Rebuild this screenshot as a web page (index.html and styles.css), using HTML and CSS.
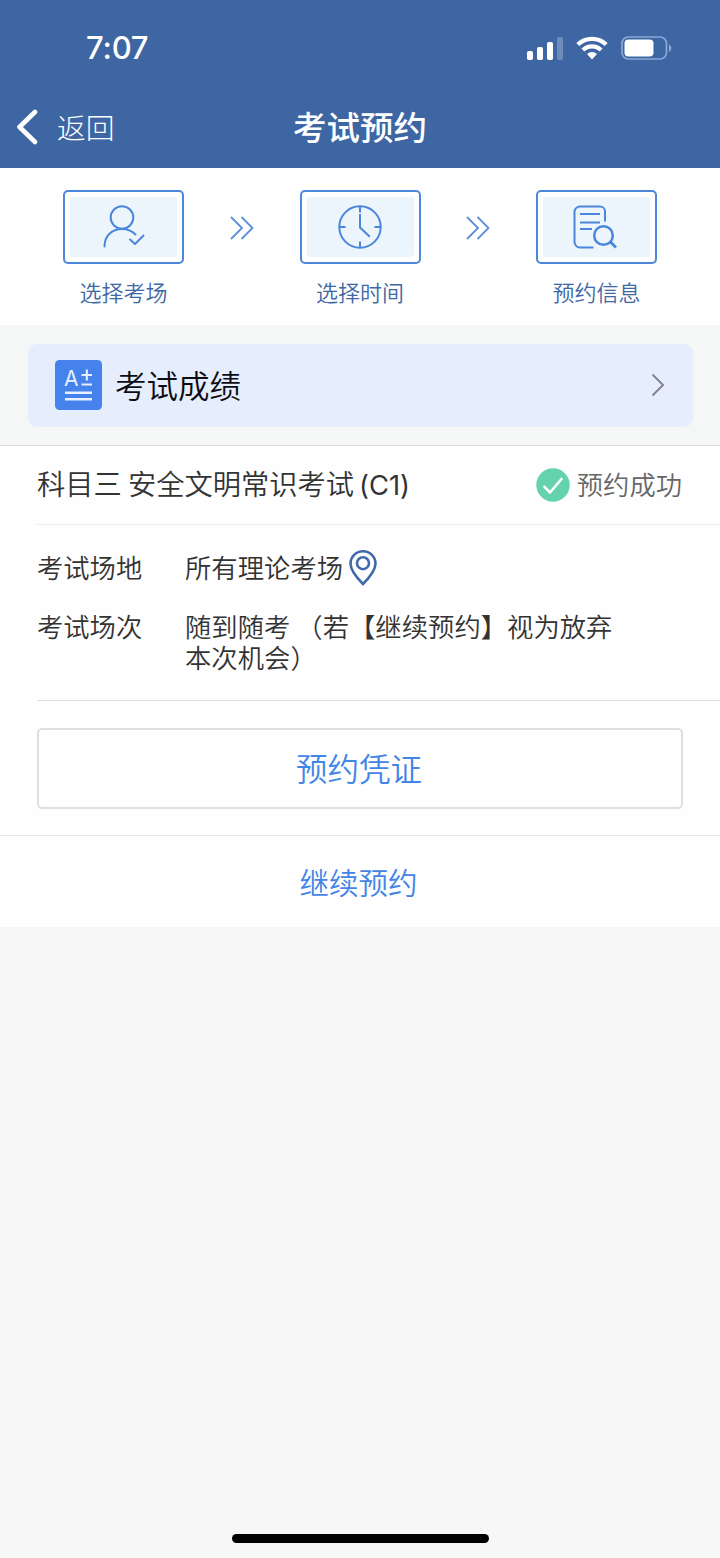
FILE: index.html
```html
<!DOCTYPE html>
<html lang="zh-CN">
<head>
    <meta charset="UTF-8">
    <meta name="viewport" content="width=device-width, initial-scale=1.0">
    <title>考试预约</title>
    <link rel="stylesheet" href="styles.css">
</head>
<body>

    <header class="header">
        <div class="status-bar">
            <span class="time">7:07</span>
            <div class="status-icons">
                <svg class="signal" width="36" height="23" viewBox="0 0 36 23" fill="#fff">
                    <rect x="0" y="14" width="6" height="9" rx="1.8"/>
                    <rect x="10" y="10" width="6" height="13" rx="1.8"/>
                    <rect x="20" y="5" width="6" height="18" rx="1.8"/>
                    <rect x="30" y="0" width="6" height="23" rx="1.8" opacity="0.25"/>
                </svg>
                <svg class="wifi" width="32" height="24" viewBox="0 0 32 24">
                    <g fill="none" stroke="#fff" stroke-width="4.2">
                        <path d="M1.8 8.6a20.3 20.3 0 0 1 28.4 0"/>
                        <path d="M6.9 14a13 13 0 0 1 18.2 0"/>
                    </g>
                    <path d="M16 23.4l-5-5.3a7 7 0 0 1 10 0z" fill="#fff"/>
                </svg>
                <svg class="battery" width="51" height="24" viewBox="0 0 51 24">
                    <rect x="1" y="1" width="44.5" height="22" rx="6.5" fill="none" stroke="#8aa8d8" stroke-width="1.7"/>
                    <rect x="3.5" y="3.5" width="29" height="17" rx="4" fill="#fff"/>
                    <path d="M48 8.5c3 1 3 6.5 0 7.5z" fill="#8aa8d8"/>
                </svg>
            </div>
        </div>
        <nav class="nav">
            <a class="back" href="#">
                <svg width="24" height="36" viewBox="0 0 24 36" fill="none" stroke="#fff" stroke-width="4.6" stroke-linecap="round" stroke-linejoin="round">
                    <path d="M19 3L3.5 18L19 33"/>
                </svg>
                <span>返回</span>
            </a>
            <h1>考试预约</h1>
        </nav>
    </header>

    <section class="steps">
        <div class="step">
            <div class="step-box">
                <div class="step-inner">
                    <svg width="44" height="46" viewBox="0 0 44 46" fill="none" stroke="#4a86dc" stroke-width="2" stroke-linecap="round" stroke-linejoin="round">
                        <circle cx="20" cy="13.5" r="11.3"/>
                        <path d="M2.5 42.5C2.5 32 10 25 20 25c5.5 0 10 2 13.5 5.5"/>
                        <path d="M28 35.5l5 4.5l8.5-8.5"/>
                    </svg>
                </div>
            </div>
            <p>选择考场</p>
        </div>
        <svg class="arrows" width="24" height="26" viewBox="0 0 24 26" fill="none" stroke="#5b8ddb" stroke-width="1.8">
            <path d="M1 2l11 11L1 24M11.5 2l11 11l-11 11"/>
        </svg>
        <div class="step">
            <div class="step-box">
                <div class="step-inner">
                    <svg width="44" height="46" viewBox="0 0 44 46" fill="none" stroke="#4a86dc" stroke-width="2">
                        <circle cx="22" cy="23" r="20.7"/>
                        <path d="M22 2.5v6M22 37.5v6M1.5 23h6M36.5 23h6"/>
                        <path d="M22 10v13.5l9.8 9.3"/>
                    </svg>
                </div>
            </div>
            <p>选择时间</p>
        </div>
        <svg class="arrows" width="24" height="26" viewBox="0 0 24 26" fill="none" stroke="#5b8ddb" stroke-width="1.8">
            <path d="M1 2l11 11L1 24M11.5 2l11 11l-11 11"/>
        </svg>
        <div class="step">
            <div class="step-box">
                <div class="step-inner">
                    <svg class="search-icon" width="44" height="46" viewBox="0 0 44 46" fill="none" stroke="#4a86dc" stroke-width="2">
                        <path d="M20.5 43.5H7a5.500 5.500 0 0 1-5.500-5.500V8A5.500 5.500 0 0 1 7 2.500h20a5 5 0 0 1 5 5v10"/>
                        <path d="M7 10h20M7 18.500h20M7 25h12"/>
                        <circle cx="30.500" cy="31.500" r="9.300" stroke-width="2.500"/>
                        <path d="M37 37.500l6 6" stroke-width="2.800"/>
                    </svg>
                </div>
            </div>
            <p>预约信息</p>
        </div>
    </section>

    <section class="score">
        <a class="score-card" href="#">
            <svg width="47" height="50" viewBox="0 0 47 50" fill="none" stroke="#e8f0ff" stroke-width="2.6">
                <rect width="47" height="50" rx="4.5" fill="#4582ec" stroke="none"/>
                <text class="grade" x="9" y="26">A</text>
                <path d="M26.5 15h10.5M31.8 9.5v11M26.5 24.5h10.5" stroke-width="2.1"/>
                <path d="M10 32.8h27M10 39.3h27"/>
            </svg>
            <span>考试成绩</span>
            <svg class="more" width="14" height="24" viewBox="0 0 14 24" fill="none" stroke="#84858c" stroke-width="2">
                <path d="M1.5 1.5L12 12L1.5 22.5"/>
            </svg>
        </a>
    </section>

    <main class="booking">
        <div class="booking-title">
            <h2>科目三 安全文明常识考试<span class="car-type">(C1)</span></h2>
            <div class="state">
                <svg width="34" height="34" viewBox="0 0 34 34">
                    <circle cx="17" cy="17" r="16.7" fill="#64d2ad"/>
                    <path d="M8.5 18.8l5.5 5.7L25.500 11" fill="none" stroke="#fff" stroke-width="2.6" stroke-linecap="round" stroke-linejoin="round"/>
                </svg>
                <span>预约成功</span>
            </div>
        </div>
        <dl class="info">
            <dt>考试场地</dt>
            <dd class="place">所有理论考场
                <svg width="28" height="36" viewBox="0 0 28 36" fill="none" stroke="#3f69a8" stroke-width="2.6">
                    <path d="M14 34C9.5 29.5 1.5 21 1.5 13.5a12.5 12.2 0 0 1 25 0C26.5 21 18.5 29.5 14 34z"/>
                    <circle cx="14" cy="13.2" r="6"/>
                </svg>
            </dd>
            <dt>考试场次</dt>
            <dd>随到随考 （若【继续预约】视为放弃本次机会）</dd>
        </dl>
        <div class="voucher">
            <button type="button">预约凭证</button>
        </div>
        <a class="continue" href="#">继续预约</a>
    </main>

    <div class="home-bar"></div>

</body>
</html>
```
FILE: styles.css
```css
* {
    box-sizing: border-box;
    margin: 0;
    padding: 0;
}

body {
    display: flex;
    flex-direction: column;
    width: 720px;
    height: 1558px;
    font-family: "Noto Sans CJK SC", sans-serif;
    font-weight: 350;
    background-color: #f7f7f7;
    color: #333;
    overflow: hidden;
    text-spacing-trim: space-all;
}

a {
    color: inherit;
    text-decoration: none;
}

svg {
    display: block;
    flex: none;
}

/* 顶部 */
.header {
    height: 168px;
    background-color: #3e66a3;
    color: #fff;
}

.status-bar {
    display: flex;
    justify-content: space-between;
    height: 88px;
    padding: 8px 48px 0 86px;
    align-items: center;
}

.time {
    font-family: Inter, sans-serif;
    font-size: 31px;
    font-weight: 550;
    line-height: 40px;
    letter-spacing: -0.2px;
}

.status-icons {
    display: flex;
    align-items: center;
}

.wifi {
    margin: 0 13px 0 13px;
}

.nav {
    display: grid;
    grid-template-columns: 1fr auto 1fr;
    align-items: center;
    height: 80px;
    padding-bottom: 2px;
}

.back {
    display: flex;
    align-items: center;
    gap: 17px;
    padding-left: 16px;
    font-size: 28.8px;
    font-weight: 300;
    line-height: 40px;
}

.nav h1 {
    font-size: 33.5px;
    font-weight: 500;
    line-height: 44px;
    padding-bottom: 2px;
}

.steps {
    display: flex;
    justify-content: space-between;
    height: 157px;
    padding: 22px 63px 0;
    background-color: #fefefe;
}

.step {
    width: 121px;
    text-align: center;
}

.step-box {
    height: 74px;
    padding: 5px;
    border: 2px solid #4d87db;
    border-radius: 5px;
}

.step-inner {
    display: flex;
    justify-content: center;
    align-items: center;
    height: 60px;
    border-radius: 3px;
    background-color: #edf5fc;
}

.step p {
    margin-top: 11px;
    font-size: 22px;
    line-height: 32px;
    color: #4068a5;
}

.search-icon {
    margin-right: 3px;
}

.arrows {
    margin-top: 25px;
}

.score {
    height: 121px;
    padding: 19px 27px 0 28px;
    border-bottom: 1px solid #dcdcdc;
    background-color: #f5f7f7;
}

.score-card {
    display: flex;
    align-items: center;
    height: 83px;
    padding: 0 28px 2px 27px;
    border-radius: 9px;
    background-color: #e6edfc;
    font-size: 31.5px;
    color: #0c0c12;
}

.grade {
    font-family: Inter, sans-serif;
    font-size: 21px;
    font-weight: 400;
    fill: #e8f0ff;
    stroke: none;
}

.score-card span {
    margin-left: 13px;
    padding-bottom: 2px;
    line-height: 46px;
}

.more {
    margin-left: auto;
}

.booking {
    height: 481px;
    background-color: #fefefe;
}

.booking-title {
    display: flex;
    justify-content: space-between;
    align-items: center;
    height: 79px;
    margin-left: 37px;
    padding: 0 38px 1px 0;
    border-bottom: 1px solid #ebebeb;
}

.booking-title h2 {
    font-size: 28.25px;
    font-weight: 350;
    line-height: 40px;
}

.car-type {
    margin-left: 5px;
    font-family: Inter, sans-serif;
    font-size: 27.3px;
    font-weight: 400;
}

.state {
    display: flex;
    align-items: center;
    gap: 7px;
    font-size: 26.3px;
    line-height: 36px;
    color: #666;
}

.state span {
    padding-bottom: 1px;
}

.info {
    display: grid;
    grid-template-columns: 148px 432px;
    row-gap: 28px;
    align-content: start;
    height: 176px;
    margin-left: 37px;
    padding-top: 26px;
    border-bottom: 1px solid #dedede;
    font-size: 26.3px;
    line-height: 31px;
}

.info dd {
    letter-spacing: 0.05px;
}

.place {
    display: flex;
    gap: 6px;
}

.place svg {
    margin: -1px 0 -8px;
}

.voucher {
    height: 135px;
    padding: 27px 37px 0;
    border-bottom: 1px solid #e6e6e6;
}

.voucher button {
    display: block;
    width: 100%;
    height: 81px;
    padding: 0 2px 4px 0;
    border: 2px solid #dedede;
    border-radius: 5px;
    background-color: #fefefe;
    font-family: inherit;
    font-size: 31.5px;
    font-weight: 350;
    color: #4385e6;
}

.continue {
    display: block;
    padding-right: 3px;
    font-size: 29.5px;
    line-height: 90px;
    text-align: center;
    color: #4385e6;
}

.home-bar {
    width: 257px;
    height: 9px;
    margin: auto auto 15px 232px;
    border-radius: 5px;
    background-color: #000;
}
```
